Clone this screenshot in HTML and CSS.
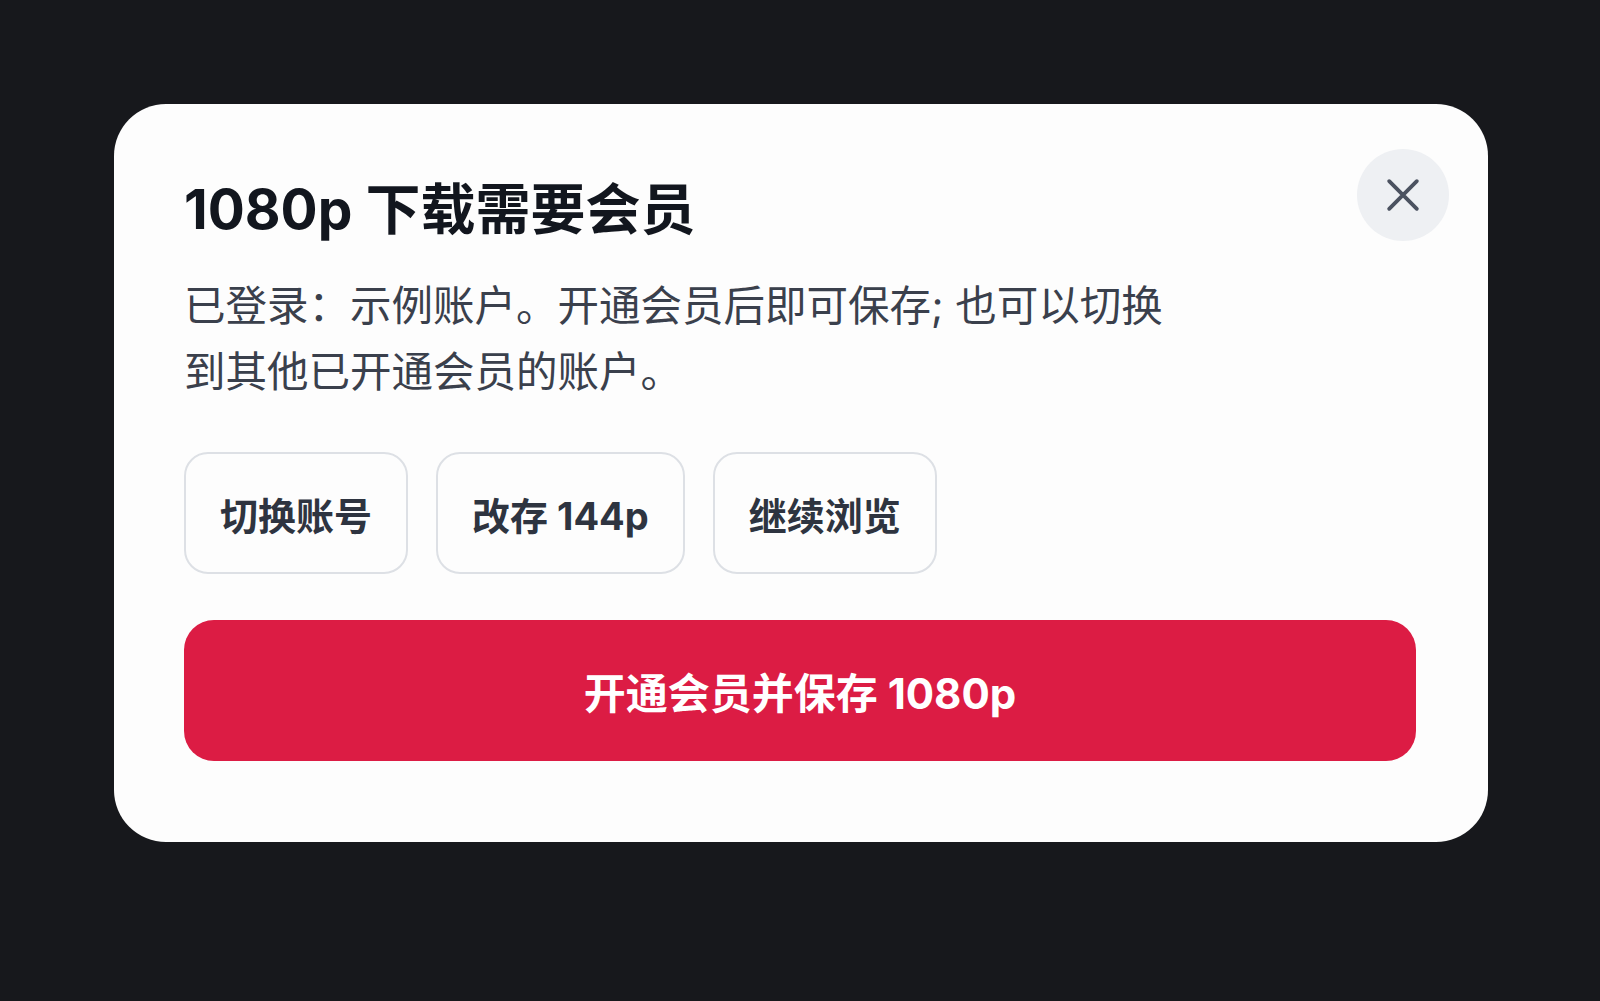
FILE: index.html
```html
<!DOCTYPE html>
<html lang="zh-CN">
<head>
<meta charset="utf-8">
<title>1080p 下载需要会员</title>
<link rel="stylesheet" href="styles.css">
</head>
<body>
  <div class="dialog">
    <button class="close" aria-label="关闭">
      <svg viewBox="0 0 32 32" width="34" height="34">
        <path d="M3 3 L29 29 M29 3 L3 29" stroke="#4b5260" stroke-width="3.6" stroke-linecap="round" fill="none"/>
      </svg>
    </button>
    <h1 class="title">1080p 下载需要会员</h1>
    <p class="desc">已登录：示例账户。开通会员后即可保存; 也可以切换到其他已开通会员的账户。</p>
    <div class="actions">
      <button class="ghost">切换账号</button>
      <button class="ghost">改存 144p</button>
      <button class="ghost">继续浏览</button>
    </div>
    <button class="primary">开通会员并保存 1080p</button>
  </div>
</body>
</html>
```
FILE: styles.css
```css
* { box-sizing: border-box; }
html, body { margin: 0; height: 100%; }
body {
  background: #17181c;
  font-family: Inter, "Noto Sans CJK SC", sans-serif;
  display: flex;
  justify-content: center;
  align-items: flex-start;
  padding-top: 104px;
}
.dialog {
  position: relative;
  width: 1374px;
  height: 738px;
  margin-left: 2px;
  background: #fdfdfd;
  border-radius: 52px;
  padding: 72px 72px 81px 70px;
  display: flex;
  flex-direction: column;
}
.close {
  position: absolute;
  top: 45px;
  right: 39px;
  width: 92px;
  height: 92px;
  border-radius: 50%;
  border: none;
  background: #eef0f3;
  display: flex;
  align-items: center;
  justify-content: center;
  padding: 0;
}
.title {
  margin: 0;
  font-size: 55px;
  line-height: 66px;
  font-weight: 700;
  color: #12161e;
}
.desc {
  margin: 31px 0 0 0;
  max-width: 995px;
  font-size: 41.5px;
  line-height: 66px;
  color: #3a404c;
  font-weight: 400;
}
.actions {
  display: flex;
  gap: 28px;
  margin-top: 47px;
}
.ghost {
  height: 122px;
  padding: 0 34px;
  border: 2px solid #dde0e5;
  border-radius: 24px;
  background: #fdfdfd;
  font-family: inherit;
  font-size: 38px;
  font-weight: 700;
  color: #2e3440;
}
.primary {
  margin-top: 46px;
  height: 141px;
  width: 100%;
  border: none;
  border-radius: 30px;
  background: #dc1c44;
  color: #ffffff;
  font-family: inherit;
  font-size: 42px;
  font-weight: 700;
}
```
